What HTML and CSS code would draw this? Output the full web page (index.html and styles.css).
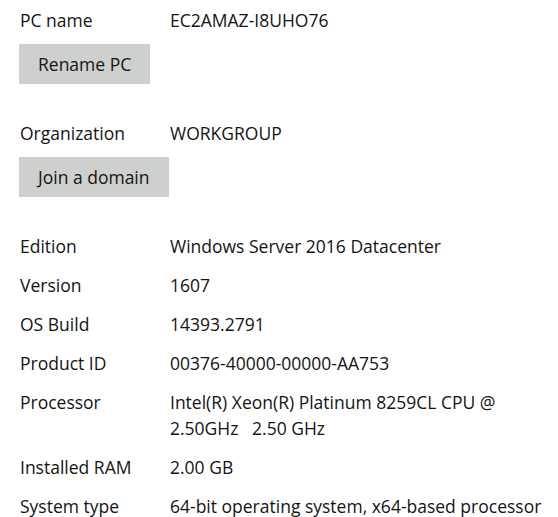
FILE: index.html
```html
<!DOCTYPE html>
<html lang="en">
<head>
<meta charset="utf-8">
<link rel="stylesheet" href="styles.css">
<title>About</title>
</head>
<body>
<main class="about">
  <section class="group">
    <div class="row"><span class="label">PC name</span><span class="value">EC2AMAZ-I8UHO76</span></div>
    <button class="btn btn-rename">Rename PC</button>
  </section>
  <section class="group">
    <div class="row"><span class="label">Organization</span><span class="value">WORKGROUP</span></div>
    <button class="btn btn-join">Join a domain</button>
  </section>
  <section class="specs">
    <div class="row"><span class="label">Edition</span><span class="value">Windows Server 2016 Datacenter</span></div>
    <div class="row"><span class="label">Version</span><span class="value">1607</span></div>
    <div class="row"><span class="label">OS Build</span><span class="value">14393.2791</span></div>
    <div class="row"><span class="label">Product ID</span><span class="value">00376-40000-00000-AA753</span></div>
    <div class="row"><span class="label">Processor</span><span class="value">Intel(R) Xeon(R) Platinum 8259CL CPU @<br>2.50GHz&nbsp;&nbsp; 2.50 GHz</span></div>
    <div class="row"><span class="label">Installed RAM</span><span class="value">2.00 GB</span></div>
    <div class="row"><span class="label">System type</span><span class="value">64-bit operating system, x64-based processor</span></div>
  </section>
</main>
</body>
</html>
```

FILE: styles.css
```css
html, body {
  margin: 0;
  padding: 0;
  background: #ffffff;
}
body {
  font-family: "Open Sans", "Noto Sans", sans-serif;
  font-size: 17.5px;
  color: #141414;
}
.about {
  display: flex;
  flex-direction: column;
  padding: 7px 0 0 20px;
}
.group {
  display: flex;
  flex-direction: column;
  align-items: flex-start;
  gap: 11px;
  margin-bottom: 36px;
}
.specs {
  display: flex;
  flex-direction: column;
  gap: 13px;
}
.row {
  display: flex;
  line-height: 26px;
}
.label {
  width: 150px;
  flex: none;
}
.value {
  flex: 1;
  white-space: nowrap;
}
.btn {
  font: inherit;
  color: #141414;
  background: #cdd0cc;
  border: none;
  border-radius: 0;
  height: 40px;
  padding: 0 19px;
  margin-left: -1px;
}
```
